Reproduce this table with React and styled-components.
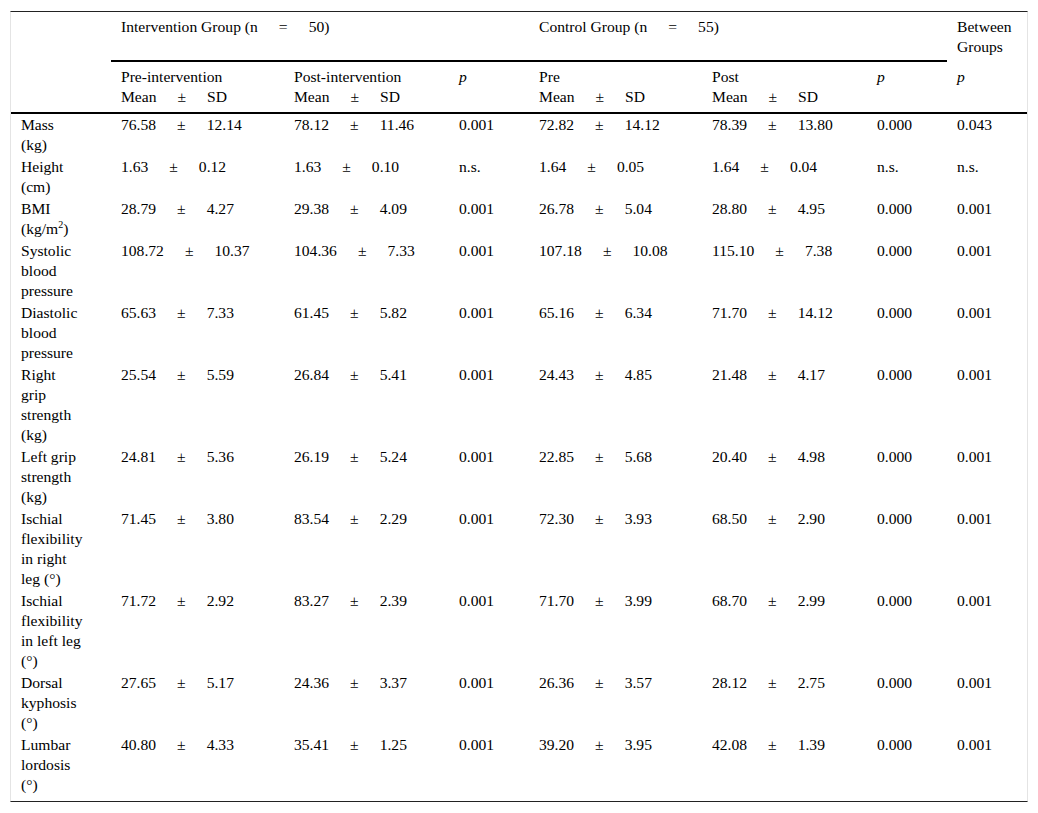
import React from 'react'
import styled, { createGlobalStyle } from 'styled-components'

const GlobalStyle = createGlobalStyle`
    body {
        margin:0;
        background:#fff;
    }
`

const Page = styled.div`
    padding:11px 0 0 10px;
    font-family:"Liberation Serif", "Times New Roman", serif;
    font-size:15.6px;
    line-height:20px;
    color:#000;
`

const Table = styled.table`
    width:1018px;
    table-layout:fixed;
    border-collapse:separate;
    border-spacing:0;
    border-top:1px solid #222;
    border-bottom:1px solid #222;
    border-left:1px solid #e4e4e4;
    border-right:1px solid #e4e4e4;
`

const HeadCell = styled.th`
    font-weight:400;
    text-align:left;
    vertical-align:top;
    padding:5px 10px;
    border-bottom:${(p) => (p.$rule ? '2px solid #000' : 'none')};
    box-sizing:border-box;
`

const Cell = styled.td`
    vertical-align:top;
    text-align:left;
    padding:${(p) => (p.$last ? '1px 10px 6px' : '1px 10px')};
    box-sizing:border-box;
`

const Label = styled(Cell)`
    padding-right:29px;
`

const Italic = styled.i`
    font-style:italic;
`

const Sign = styled.span`
    margin:0 21px;
`

const Sup = styled.sup`
    font-size:10px;
    line-height:0;
`

const colWidths = [100, 173, 165, 80, 173, 165, 80, 80]

const rows = [
    { label: <>Mass (kg)</>, a: ['76.58', '12.14'], b: ['78.12', '11.46'], p1: '0.001', c: ['72.82', '14.12'], d: ['78.39', '13.80'], p2: '0.000', bg: '0.043' },
    { label: <>Height (cm)</>, a: ['1.63', '0.12'], b: ['1.63', '0.10'], p1: 'n.s.', c: ['1.64', '0.05'], d: ['1.64', '0.04'], p2: 'n.s.', bg: 'n.s.' },
    { label: <>BMI (kg/m<Sup>2</Sup>)</>, a: ['28.79', '4.27'], b: ['29.38', '4.09'], p1: '0.001', c: ['26.78', '5.04'], d: ['28.80', '4.95'], p2: '0.000', bg: '0.001' },
    { label: <>Systolic blood pressure</>, a: ['108.72', '10.37'], b: ['104.36', '7.33'], p1: '0.001', c: ['107.18', '10.08'], d: ['115.10', '7.38'], p2: '0.000', bg: '0.001' },
    { label: <>Diastolic blood pressure</>, a: ['65.63', '7.33'], b: ['61.45', '5.82'], p1: '0.001', c: ['65.16', '6.34'], d: ['71.70', '14.12'], p2: '0.000', bg: '0.001' },
    { label: <>Right grip strength (kg)</>, a: ['25.54', '5.59'], b: ['26.84', '5.41'], p1: '0.001', c: ['24.43', '4.85'], d: ['21.48', '4.17'], p2: '0.000', bg: '0.001' },
    { label: <>Left grip strength (kg)</>, a: ['24.81', '5.36'], b: ['26.19', '5.24'], p1: '0.001', c: ['22.85', '5.68'], d: ['20.40', '4.98'], p2: '0.000', bg: '0.001' },
    { label: <>Ischial flexibility in right leg (°)</>, a: ['71.45', '3.80'], b: ['83.54', '2.29'], p1: '0.001', c: ['72.30', '3.93'], d: ['68.50', '2.90'], p2: '0.000', bg: '0.001' },
    { label: <>Ischial flexibility in left leg (°)</>, a: ['71.72', '2.92'], b: ['83.27', '2.39'], p1: '0.001', c: ['71.70', '3.99'], d: ['68.70', '2.99'], p2: '0.000', bg: '0.001' },
    { label: <>Dorsal kyphosis (°)</>, a: ['27.65', '5.17'], b: ['24.36', '3.37'], p1: '0.001', c: ['26.36', '3.57'], d: ['28.12', '2.75'], p2: '0.000', bg: '0.001' },
    { label: <>Lumbar lordosis (°)</>, a: ['40.80', '4.33'], b: ['35.41', '1.25'], p1: '0.001', c: ['39.20', '3.95'], d: ['42.08', '1.39'], p2: '0.000', bg: '0.001' },
]

function MeanSd({ v }) {
    return (
        <>
            {v[0]}<Sign>±</Sign>{v[1]}
        </>
    )
}

export default function App() {
    return (
        <Page>
            <GlobalStyle />
            <Table>
                <colgroup>
                    {colWidths.map((w, i) => (
                        <col key={i} style={{ width: w }} />
                    ))}
                </colgroup>
                <thead>
                    <tr>
                        <HeadCell rowSpan={2} $rule></HeadCell>
                        <HeadCell colSpan={3} $rule>Intervention Group (n<Sign>=</Sign>50)</HeadCell>
                        <HeadCell colSpan={3} $rule>Control Group (n<Sign>=</Sign>55)</HeadCell>
                        <HeadCell>Between Groups</HeadCell>
                    </tr>
                    <tr>
                        <HeadCell $rule>Pre-intervention<br />Mean<Sign>±</Sign>SD</HeadCell>
                        <HeadCell $rule>Post-intervention<br />Mean<Sign>±</Sign>SD</HeadCell>
                        <HeadCell $rule><Italic>p</Italic></HeadCell>
                        <HeadCell $rule>Pre<br />Mean<Sign>±</Sign>SD</HeadCell>
                        <HeadCell $rule>Post<br />Mean<Sign>±</Sign>SD</HeadCell>
                        <HeadCell $rule><Italic>p</Italic></HeadCell>
                        <HeadCell $rule><Italic>p</Italic></HeadCell>
                    </tr>
                </thead>
                <tbody>
                    {rows.map((row, i) => {
                        const last = i === rows.length - 1
                        return (
                            <tr key={i}>
                                <Label $last={last}>{row.label}</Label>
                                <Cell $last={last}><MeanSd v={row.a} /></Cell>
                                <Cell $last={last}><MeanSd v={row.b} /></Cell>
                                <Cell $last={last}>{row.p1}</Cell>
                                <Cell $last={last}><MeanSd v={row.c} /></Cell>
                                <Cell $last={last}><MeanSd v={row.d} /></Cell>
                                <Cell $last={last}>{row.p2}</Cell>
                                <Cell $last={last}>{row.bg}</Cell>
                            </tr>
                        )
                    })}
                </tbody>
            </Table>
        </Page>
    )
}
